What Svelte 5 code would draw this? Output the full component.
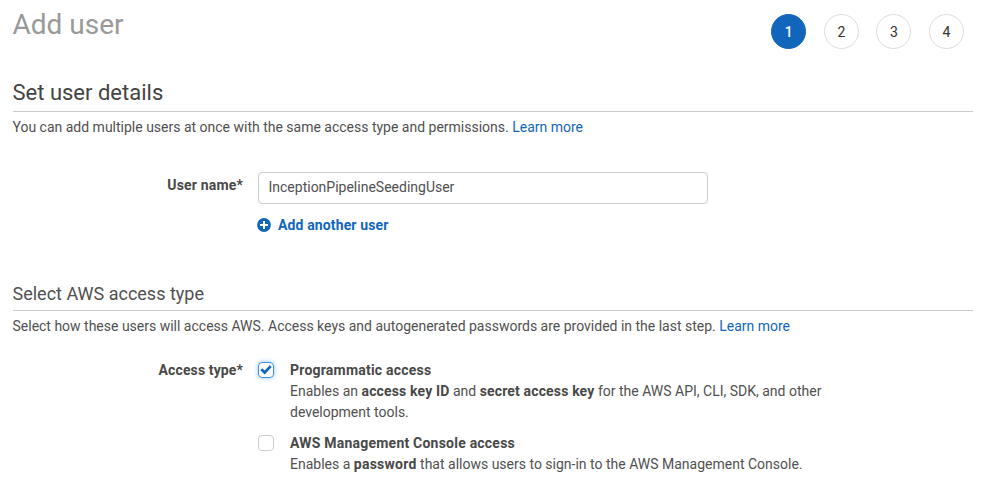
<script>
  const steps = [1, 2, 3, 4];
</script>

<main>
  <header>
    <h1>Add user</h1>
    <div class="steps">
      {#each steps as s}
        <span class="step" class:active={s === 1}>{s}</span>
      {/each}
    </div>
  </header>

  <h2>Set user details</h2>
  <p class="intro">You can add multiple users at once with the same access type and permissions. <a href="#learn">Learn more</a></p>

  <div class="row user">
    <label class="name" for="user">User name*</label>
    <div class="field">
      <input id="user" type="text" value="InceptionPipelineSeedingUser" />
      <a class="add" href="#add">
        <svg width="14" height="14" viewBox="0 0 14 14"><circle cx="7" cy="7" r="6.9" fill="#1166bb" /><path d="M7 3v8M3 7h8" stroke="#fff" stroke-width="2" /></svg>
        <span>Add another user</span>
      </a>
    </div>
  </div>

  <h3>Select AWS access type</h3>
  <p class="intro">Select how these users will access AWS. Access keys and autogenerated passwords are provided in the last step. <a href="#learn">Learn more</a></p>

  <div class="row access">
    <span class="name type">Access type*</span>
    <div class="options">
      <div class="option">
        <span class="box checked"><svg width="14" height="14" viewBox="0 0 14 14"><path d="M1.3 7.3l2-2 2.4 2.2 5-5.3 2 1.9-7 7.4z" fill="#1166bb" /></svg></span>
        <div><b class="title">Programmatic access</b><br />Enables an <b>access key ID</b> and <b>secret access key</b> for the AWS API, CLI, SDK, and other<br />development tools.</div>
      </div>
      <div class="option">
        <span class="box"></span>
        <div><b class="title">AWS Management Console access</b><br />Enables a <b class="password">password</b> that allows users to sign-in to the AWS Management Console.</div>
      </div>
    </div>
  </div>
</main>

<style>
  :global(body) { background: #fff; }
  main { box-sizing: border-box; width: 986px; height: 503px; overflow: hidden; padding: 0 13px 0 12.5px; font: 14px/21px Roboto, sans-serif; color: #505050; }
  header { display: flex; justify-content: space-between; height: 76px; }
  h1, h2, h3, p { margin: 0; font-weight: 400; }
  h1 { font-size: 28px; line-height: 32px; padding-top: 9px; color: #999; }
  .steps { display: flex; gap: 17.6px; padding: 14px 9px 0 0; }
  .step { box-sizing: border-box; width: 35px; height: 35px; border: 1px solid #ddd; border-radius: 50%; text-align: center; line-height: 34px; color: #333; }
  .step.active { background: #1166bb; border-color: #1166bb; color: #fff; font-weight: 500; }
  h2 { box-sizing: border-box; height: 36px; line-height: 33px; font-size: 22px; color: #444; border-bottom: 1px solid #ccc; }
  h3 { box-sizing: border-box; height: 31px; padding-top: 1px; line-height: 26px; font-size: 18px; border-bottom: 1px solid #ccc; }
  .intro { padding-top: 5px; white-space: nowrap; letter-spacing: -0.004px; }
  a { color: #1166bb; text-decoration: none; }
  b { color: #484848; letter-spacing: 0.15px; }
  .title { letter-spacing: 0.22px; }
  .password { letter-spacing: 0.25px; }
  .row { display: flex; }
  .name { width: 230.5px; margin-right: 15px; text-align: right; color: #484848; font-weight: 700; letter-spacing: 0.18px; }
  .type { letter-spacing: 0.12px; }
  .user { box-sizing: border-box; height: 142px; padding-top: 34px; }
  .user .name { padding-top: 3px; }
  input { display: block; box-sizing: border-box; width: 450px; height: 32px; padding: 0 10px 2px 9.5px; border: 1px solid #ccc; border-radius: 4px; font: inherit; color: #505050; background: #fff; }
  .add { display: flex; gap: 7px; margin-top: 11px; margin-left: -1px; font-weight: 700; letter-spacing: 0.13px; }
  .add svg { margin-top: 3px; }
  .access { padding-top: 23px; }
  .option { display: flex; margin-bottom: 10px; }
  .box { box-sizing: border-box; width: 16px; height: 16px; margin: 2px 16px 0 0; border: 1px solid #ccc; border-radius: 4px; }
  .box svg { display: block; }
  .checked { border-color: #3b8de0; box-shadow: 0 0 4px 1px #b9dafa; }
</style>
